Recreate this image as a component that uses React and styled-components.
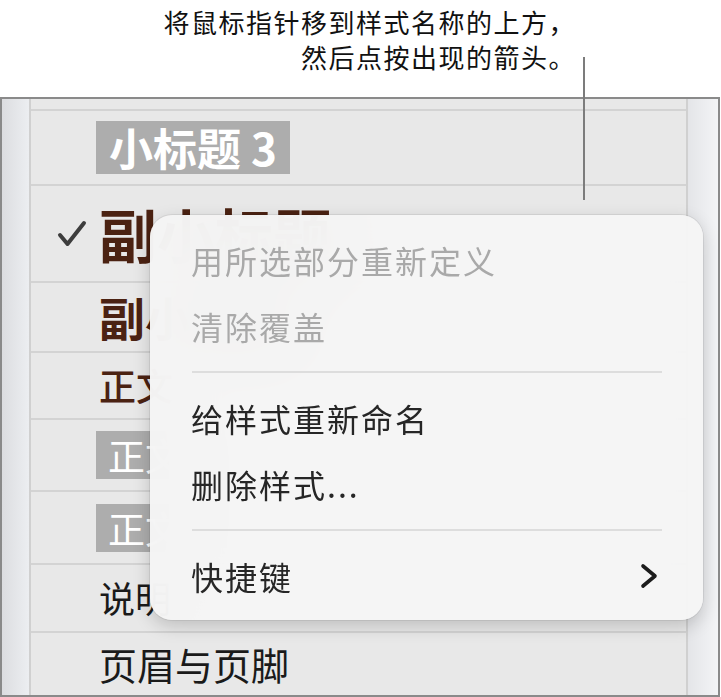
import React from "react";
import styled, { createGlobalStyle } from "styled-components";

const GlobalStyle = createGlobalStyle`
  html, body {
    margin: 0;
    padding: 0;
    background: #ffffff;
  }
  body {
    font-family: "Noto Sans CJK SC", "Noto Sans", sans-serif;
  }
`;

const Page = styled.div`
  position: relative;
  width: 721px;
  height: 697px;
  overflow: hidden;
  background: #ffffff;
`;

const Callout = styled.div`
  height: 97px;
  box-sizing: border-box;
  padding: 4px 145px 0 0;
  text-align: right;
  font-size: 26px;
  letter-spacing: 1.5px;
  line-height: 35px;
  color: #111111;
`;

const Leader = styled.div`
  position: absolute;
  left: 583px;
  top: 57px;
  width: 2px;
  height: 143px;
  background: #7c7c7c;
  z-index: 3;
`;

const Panel = styled.div`
  display: grid;
  grid-template-columns: 29px 1fr 32px;
  width: 720px;
  height: 600px;
  box-sizing: border-box;
  border: 2px solid #8a8a8a;
  background: #e8e8e8;
`;

const Strip = styled.div`
  background: ${(p) =>
    p.side === "left"
      ? "linear-gradient(to right, #dcdde0, #eceef1)"
      : "linear-gradient(to right, #e4e5e8, #f3f4f6)"};
  border-${(p) => (p.side === "left" ? "right" : "left")}: 2px solid #d0d0d0;
`;

const List = styled.div`
  display: flex;
  flex-direction: column;
  overflow: hidden;
`;

const Row = styled.div`
  display: flex;
  align-items: center;
  flex: 0 0 ${(p) => p.h}px;
  height: ${(p) => p.h}px;
  padding-left: 24px;
  border-bottom: 2px solid #d3d3d3;
  box-sizing: content-box;
  ${(p) => p.last && "border-bottom: none; flex: 1 1 auto;"}
`;

const CheckCell = styled.div`
  width: 44px;
  flex: 0 0 44px;
  display: flex;
  align-items: center;
`;

const StyleName = styled.span`
  font-size: ${(p) => p.size}px;
  font-weight: ${(p) => p.weight || 400};
  color: ${(p) => p.color || "#1a1a1a"};
  white-space: nowrap;
  line-height: 1.2;
`;

const Highlight = styled.span`
  display: inline-block;
  margin-left: -3px;
  padding: 0 ${(p) => p.pad}px;
  height: ${(p) => p.boxH}px;
  line-height: ${(p) => p.boxH}px;
  background: #adadad;
  color: #ffffff;
  font-size: ${(p) => p.size}px;
  font-weight: ${(p) => p.weight || 400};
  white-space: nowrap;
`;

const Menu = styled.div`
  position: absolute;
  left: 150px;
  top: 215px;
  width: 553px;
  height: 405px;
  box-sizing: border-box;
  padding: 12px 0 9px;
  border-radius: 22px;
  background: rgba(245, 245, 245, 0.97);
  backdrop-filter: blur(30px);
  box-shadow: 0 0 0 1px rgba(0, 0, 0, 0.07), 0 6px 18px rgba(0, 0, 0, 0.18);
  z-index: 2;
  display: flex;
  flex-direction: column;
`;

const MenuItem = styled.div`
  display: flex;
  align-items: center;
  justify-content: space-between;
  height: 66px;
  padding: 0 45px 0 41px;
  font-size: 32px;
  letter-spacing: 2px;
  color: ${(p) => (p.disabled ? "#a9a9a9" : "#262626")};
  white-space: nowrap;
`;

const Separator = styled.div`
  height: 26px;
  display: flex;
  align-items: center;
  margin: 0 41px 0 42px;
  &::after {
    content: "";
    flex: 1;
    height: 2px;
    background: #dddddd;
  }
`;

const Check = () => (
  <svg width="30" height="30" viewBox="0 0 30 30" style={{ marginLeft: 2 }}>
    <path
      d="M3 16 L10.5 25 L27 4"
      fill="none"
      stroke="#3d3d3d"
      strokeWidth="4"
      strokeLinecap="round"
      strokeLinejoin="round"
    />
  </svg>
);

const Chevron = () => (
  <svg width="18" height="26" viewBox="0 0 18 26">
    <polyline
      points="3,3 15,13 3,23"
      fill="none"
      stroke="#1c1c1c"
      strokeWidth="3.6"
      strokeLinecap="round"
      strokeLinejoin="round"
    />
  </svg>
);

const brown = "#4b2212";

export default function App() {
  return (
    <Page>
      <GlobalStyle />
      <Callout>
        将鼠标指针移到样式名称的上方，
        <br />
        然后点按出现的箭头。
      </Callout>
      <Leader />
      <Panel>
        <Strip side="left" />
        <List>
          <Row h={10} />
          <Row h={73}>
            <CheckCell />
            <Highlight size={44} weight={700} boxH={53} pad={13}>
              小标题 3
            </Highlight>
          </Row>
          <Row h={95}>
            <CheckCell>
              <Check />
            </CheckCell>
            <StyleName size={58} weight={700} color={brown}>
              副小标题
            </StyleName>
          </Row>
          <Row h={68}>
            <CheckCell />
            <StyleName size={46} weight={700} color={brown}>
              副小标题
            </StyleName>
          </Row>
          <Row h={65}>
            <CheckCell />
            <StyleName size={37} weight={500} color={brown}>
              正文
            </StyleName>
          </Row>
          <Row h={70}>
            <CheckCell />
            <Highlight size={37} boxH={48} pad={12}>
              正文
            </Highlight>
          </Row>
          <Row h={71}>
            <CheckCell />
            <Highlight size={37} boxH={48} pad={12}>
              正文
            </Highlight>
          </Row>
          <Row h={66}>
            <CheckCell />
            <StyleName size={36}>说明</StyleName>
          </Row>
          <Row h={62} last>
            <CheckCell />
            <StyleName size={38}>页眉与页脚</StyleName>
          </Row>
        </List>
        <Strip side="right" />
      </Panel>
      <Menu>
        <MenuItem disabled>用所选部分重新定义</MenuItem>
        <MenuItem disabled>清除覆盖</MenuItem>
        <Separator />
        <MenuItem>给样式重新命名</MenuItem>
        <MenuItem>删除样式...</MenuItem>
        <Separator />
        <MenuItem>
          快捷键
          <Chevron />
        </MenuItem>
      </Menu>
    </Page>
  );
}
